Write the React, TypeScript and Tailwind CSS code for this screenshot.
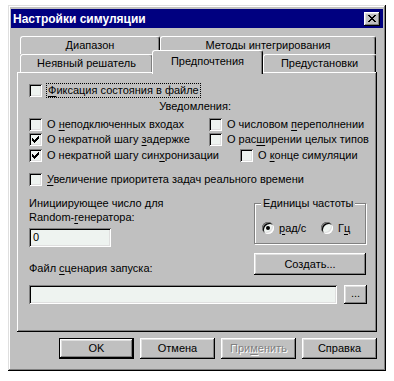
import type { ReactNode } from "react";

const windowBevel =
  "shadow-[inset_-1px_-1px_#000,inset_1px_1px_#dfdfdf,inset_-2px_-2px_#808080,inset_2px_2px_#fff]";
const raised =
  "shadow-[inset_-1px_-1px_#000,inset_1px_1px_#fff,inset_-2px_-2px_#808080,inset_2px_2px_#dfdfdf]";
const sunken =
  "shadow-[inset_1px_1px_#808080,inset_-1px_-1px_#fff,inset_2px_2px_#000,inset_-2px_-2px_#dfdfdf]";
const fieldBg = "bg-[#eef3f0]";

function U({ children }: { children: ReactNode }) {
  return <span className="underline decoration-1 underline-offset-[2px]">{children}</span>;
}

function Box({ checked }: { checked?: boolean }) {
  return (
    <span className={`w-[13px] h-[13px] shrink-0 flex items-center justify-center ${fieldBg} ${sunken}`}>
      {checked && (
        <svg width="7" height="7" viewBox="0 0 7 7" shapeRendering="crispEdges">
          <path d="M6 0h1v3h-1v1h-1v1h-1v1h-1v1h-1v-1h-1v-1h-1v-3h1v1h1v1h1v-1h1v-1h1z" fill="#000" />
        </svg>
      )}
    </span>
  );
}

function CheckItem({ checked, children, className = "" }: { checked?: boolean; children: ReactNode; className?: string }) {
  return (
    <div className={`flex items-center gap-[5px] h-[15px] whitespace-nowrap ${className}`}>
      <Box checked={checked} />
      <span>{children}</span>
    </div>
  );
}

function Radio({ on, children, className = "" }: { on?: boolean; children: ReactNode; className?: string }) {
  return (
    <div className={`flex items-center gap-[5px] ${className}`}>
      <span className={`w-[12px] h-[12px] rounded-full flex items-center justify-center ${fieldBg} ${sunken}`}>
        {on && <span className="w-[4px] h-[4px] rounded-full bg-black" />}
      </span>
      <span>{children}</span>
    </div>
  );
}

function Tab({ w, children }: { w: string; children: ReactNode }) {
  return (
    <div
      className={`${w} h-full flex items-center justify-center rounded-t-[3px] border-t border-l border-r border-t-white border-l-white border-r-black shadow-[inset_-1px_0_#808080]`}
    >
      {children}
    </div>
  );
}

function Btn({ children, className = "", def }: { children: ReactNode; className?: string; def?: boolean }) {
  return (
    <div
      className={`flex items-center justify-center bg-[#c0c0c0] ${raised} ${def ? "border border-black" : ""} ${className}`}
    >
      {children}
    </div>
  );
}

export default function App() {
  return (
    <div className="w-[394px] h-[381px] bg-white pt-[5px] pl-[8px] font-['Liberation_Sans',Arial,sans-serif] text-[11px] text-black leading-none">
      <div className={`w-[378px] h-[366px] bg-[#c0c0c0] p-[3px] pt-[4px] ${windowBevel}`}>
        {/* Title bar */}
        <div className="h-[19px] bg-[#000080] flex items-center justify-between pl-[2px] pr-[3px]">
          <span className="text-white font-bold text-[12px]">Настройки симуляции</span>
          <div className={`w-[16px] h-[14px] bg-[#c0c0c0] flex items-center justify-center ${raised}`}>
            <svg width="8" height="7" viewBox="0 0 8 7" shapeRendering="crispEdges">
              <path
                d="M0 0h2v1h1v1h2v-1h1v-1h2v1h-1v1h-1v1h-1v1h1v1h1v1h1v1h-2v-1h-1v-1h-2v1h-1v1h-2v-1h1v-1h1v-1h1v-1h-1v-1h-1z"
                fill="#000"
              />
            </svg>
          </div>
        </div>

        <div className="px-[6px] pt-[8px]">
          {/* Tabs */}
          <div className="flex h-[18px] ml-[3px]">
            <Tab w="w-[140px]">Диапазон</Tab>
            <Tab w="w-[216px]">Методы интегрирования</Tab>
          </div>
          <div className="flex h-[18px] ml-[3px]">
            <Tab w="w-[133px]">Неявный решатель</Tab>
            <div className="relative z-10 -ml-[1px] -mt-[4px] w-[111px] h-[24px] pb-[2px] bg-[#c0c0c0] flex items-center justify-center rounded-t-[3px] border-t border-l border-r border-t-white border-l-white border-r-black shadow-[inset_-1px_0_#808080]">
              Предпочтения
            </div>
            <Tab w="w-[113px]">Предустановки</Tab>
          </div>

          {/* Panel */}
          <div className="h-[260px] shadow-[inset_-1px_-1px_#000,inset_1px_1px_#fff,inset_-2px_-2px_#808080] pl-[12px] pt-[11px]">
            <div className="flex items-center h-[15px]">
              <Box />
              <span className="ml-[4px] h-[15px] px-[1px] flex items-center border border-dotted border-black">
                <U>Ф</U>иксация состояния в файле
              </span>
            </div>
            <div className="h-[16px] w-[202px] flex items-center justify-end">Уведомления:</div>

            <div className="mt-[3px] flex">
              <CheckItem className="w-[180px]">
                О <U>н</U>еподключенных входах
              </CheckItem>
              <CheckItem>
                О числовом <U>п</U>ереполнении
              </CheckItem>
            </div>
            <div className="flex">
              <CheckItem checked className="w-[180px]">
                О некратной шагу <U>з</U>адержке
              </CheckItem>
              <CheckItem>
                О рас<U>ш</U>ирении целых типов
              </CheckItem>
            </div>
            <div className="mt-[1px] flex">
              <CheckItem checked className="w-[211px]">
                О некратной шагу син<U>х</U>ронизации
              </CheckItem>
              <CheckItem>
                О <U>к</U>онце симуляции
              </CheckItem>
            </div>

            <CheckItem className="mt-[9px]">
              <U>У</U>величение приоритета задач реального времени
            </CheckItem>

            <div className="flex mt-[9px]">
              <div className="w-[200px]">
                <div className="leading-[14px]">
                  Инициирующее число для
                  <br />
                  Random-<U>г</U>енератора:
                </div>
                <div className={`mt-[4px] w-[82px] h-[19px] flex items-center pl-[4px] ${fieldBg} ${sunken}`}>0</div>
                <div className="mt-[14px] leading-[14px]">
                  Файл <U>с</U>ценария запуска:
                </div>
              </div>
              <div className="ml-[25px] mt-[7px] w-[112px]">
                <div className="relative h-[41px] border border-[#808080] shadow-[inset_1px_1px_#fff,1px_1px_#fff]">
                  <span className="absolute -top-[7px] left-[6px] bg-[#c0c0c0] px-[2px] leading-[13px]">
                    Единицы частоты
                  </span>
                  <div className="flex items-center pt-[18px] pl-[7px]">
                    <Radio on className="w-[59px]">
                      <U>р</U>ад/с
                    </Radio>
                    <Radio>
                      Г<U>ц</U>
                    </Radio>
                  </div>
                </div>
                <Btn className="mt-[9px] h-[22px] w-[112px]">
                  Соз<U>д</U>ать...
                </Btn>
              </div>
            </div>

            <div className="mt-[10px] flex">
              <div className={`w-[308px] h-[19px] ${fieldBg} ${sunken}`} />
              <Btn className="ml-[7px] w-[23px] h-[19px] items-end pb-[5px]">...</Btn>
            </div>
          </div>

          {/* Buttons */}
          <div className="mt-[6px] flex justify-end gap-[6px]">
            <Btn def className="w-[75px] h-[21px]">
              OK
            </Btn>
            <Btn className="w-[75px] h-[21px]">Отмена</Btn>
            <Btn className="w-[75px] h-[21px] text-[#808080] [text-shadow:1px_1px_0_#fff]">
              При<U>м</U>енить
            </Btn>
            <Btn className="w-[75px] h-[21px]">Справка</Btn>
          </div>
        </div>
      </div>
    </div>
  );
}
